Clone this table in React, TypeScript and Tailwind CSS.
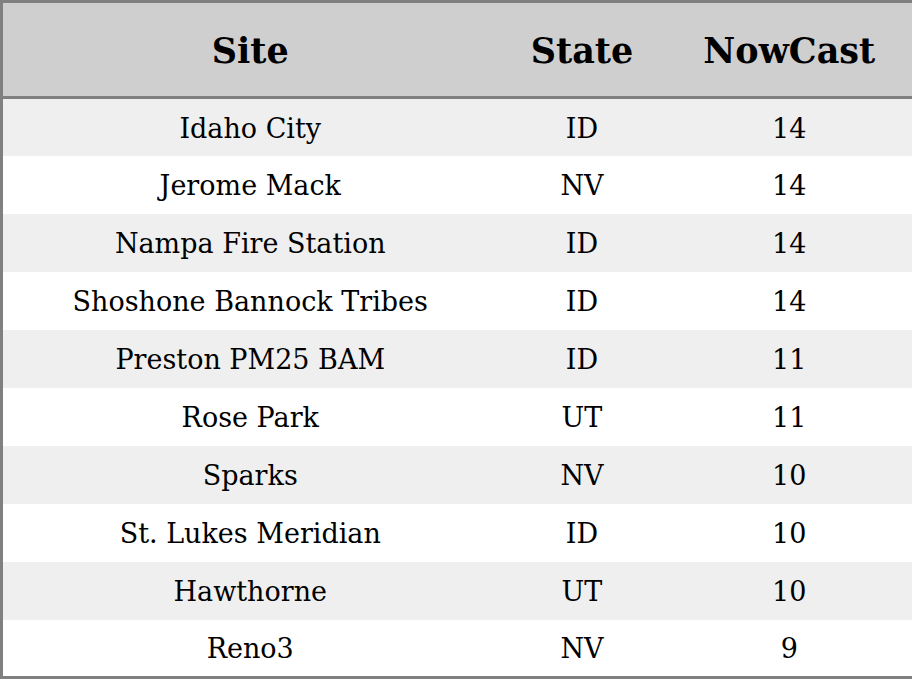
import React from 'react';

const rows: [string, string, number][] = [
  ['Idaho City', 'ID', 14],
  ['Jerome Mack', 'NV', 14],
  ['Nampa Fire Station', 'ID', 14],
  ['Shoshone Bannock Tribes', 'ID', 14],
  ['Preston PM25 BAM', 'ID', 11],
  ['Rose Park', 'UT', 11],
  ['Sparks', 'NV', 10],
  ['St. Lukes Meridian', 'ID', 10],
  ['Hawthorne', 'UT', 10],
  ['Reno3', 'NV', 9],
];

const App: React.FC = () => {
  return (
    <div
      className="w-[912px] h-[679px] bg-white"
      style={{ fontFamily: '"DejaVu Serif", serif' }}
    >
      <table className="w-[912px] h-[679px] border-collapse border-[3px] border-[#808080] text-black table-fixed">
        <colgroup>
          <col className="w-[496px]" />
          <col className="w-[169px]" />
          <col className="w-[247px]" />
        </colgroup>
        <thead>
          <tr className="h-[96px] bg-[#cfcfcf] border-b-[3px] border-[#808080]">
            <th className="text-[35px] font-bold text-center pt-[3px]">Site</th>
            <th className="text-[35px] font-bold text-center pt-[3px]">State</th>
            <th className="text-[35px] font-bold text-center pt-[3px]">NowCast</th>
          </tr>
        </thead>
        <tbody>
          {rows.map(([site, state, val], i) => (
            <tr key={site} className={i % 2 === 0 ? 'h-[58px] bg-[#efefef]' : 'h-[58px] bg-white'}>
              <td className="text-[27px] text-center pt-[3px]">{site}</td>
              <td className="text-[27px] text-center pt-[3px]">{state}</td>
              <td className="text-[27px] text-center pt-[3px]">{val}</td>
            </tr>
          ))}
        </tbody>
      </table>
    </div>
  );
};

export default App;
